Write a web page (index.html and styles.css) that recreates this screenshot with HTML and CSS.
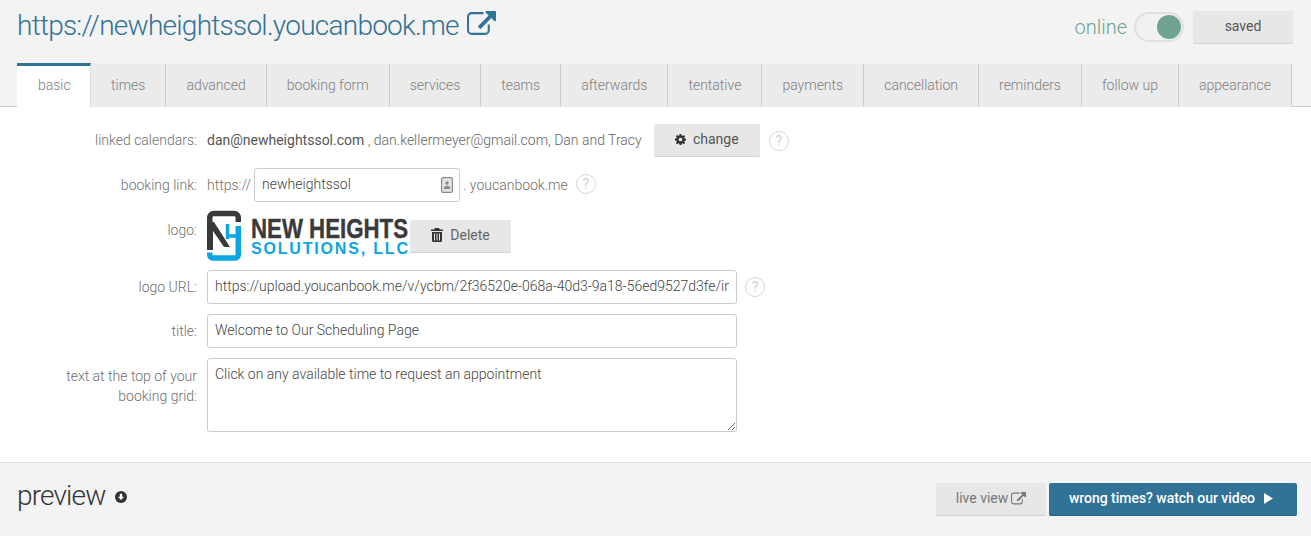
FILE: index.html
```html
<!DOCTYPE html>
<html lang="en">
<head>
<meta charset="utf-8">
<title>youcanbook.me settings</title>
<link rel="stylesheet" href="styles.css">
</head>
<body>
<svg class="defs" width="0" height="0" aria-hidden="true">
  <symbol id="ext" viewBox="0 0 28 24"><path fill="currentColor" d="M22 13.500v5A4.500 4.500 0 0 1 17.500 23h-13A4.500 4.500 0 0 1 0 18.500v-13A4.500 4.500 0 0 1 4.500 1H15.500a.5.500 0 0 1 .5.500v1a.5.500 0 0 1-.5.500H4.500A2.500 2.500 0 0 0 2 5.500v13A2.500 2.500 0 0 0 4.500 21h13a2.500 2.500 0 0 0 2.500-2.500v-5a.5.500 0 0 1 .5-.5h1a.5.500 0 0 1 .5.500zM28 .9v8a1 1 0 0 1-1.700.7l-2.800-2.800-10.200 10.200a.5.500 0 0 1-.7 0l-1.800-1.800a.5.500 0 0 1 0-.7L20.900 4.300 18.100 1.500A1 1 0 0 1 18.800-.1h8A1 1 0 0 1 28 .9z"/></symbol>
</svg>
<header class="top">
  <div class="title-row">
    <h1 class="site-url"><span class="url-text">https://newheightssol.youcanbook.me</span> <svg class="ext-big"><use href="#ext"/></svg></h1>
    <div class="status">
      <span class="online">online</span>
      <span class="toggle"><span class="knob"></span></span>
      <button class="btn saved">saved</button>
    </div>
  </div>
  <nav class="tabs">
    <a class="tab active">basic</a><a class="tab">times</a><a class="tab">advanced</a><a class="tab">booking form</a><a class="tab">services</a><a class="tab">teams</a><a class="tab">afterwards</a><a class="tab">tentative</a><a class="tab">payments</a><a class="tab">cancellation</a><a class="tab">reminders</a><a class="tab">follow up</a><a class="tab">appearance</a>
  </nav>
</header>
<main class="form">
  <div class="row row-cal">
    <label class="lbl">linked calendars:</label>
    <div class="ctl">
      <div class="cal-text"><span class="cal-main">dan@newheightssol.com</span><span class="cal-rest">&nbsp;, dan.kellermeyer@gmail.com, Dan and Tracy</span></div>
      <button class="btn change">
        <svg class="i-gear" viewBox="0 0 16 16"><path fill="#333" fill-rule="evenodd" d="M6.700 0h2.600l.4 2.200 1.300.6 1.900-1.300 1.800 1.800-1.300 1.900.6 1.300 2 .4v2.600l-2 .4-.6 1.300 1.300 1.900-1.800 1.800-1.900-1.300-1.300.6-.4 2H6.700l-.4-2-1.300-.6-1.900 1.300-1.800-1.800 1.300-1.900-.6-1.300-2-.4V6.700l2-.4.6-1.300L1.300 3.100l1.800-1.800L5 2.600l1.300-.6zM8 5.300a2.700 2.700 0 1 0 0 5.400 2.700 2.700 0 0 0 0-5.400z"/></svg>
        change
      </button>
      <span class="help help-cal">?</span>
    </div>
  </div>
  <div class="row row-link">
    <label class="lbl">booking link:</label>
    <div class="ctl">
      <span class="muted">https://</span>
      <span class="input-wrap">
        <input class="field short" value="newheightssol">
        <svg class="contact" viewBox="0 0 12 16"><rect x=".6" y=".6" width="10.800" height="14.800" rx="1.500" fill="#e4e4e4" stroke="#8a8a8a" stroke-width="1.200"/><circle cx="6" cy="6" r="1.700" fill="#8a8a8a"/><path d="M2.800 12c0-2.200 1.200-3.200 3.200-3.200s3.200 1 3.200 3.200z" fill="#8a8a8a"/></svg>
      </span>
      <span class="muted suffix">. youcanbook.me</span>
      <span class="help help-link">?</span>
    </div>
  </div>
  <div class="row row-logo">
    <label class="lbl">logo:</label>
    <div class="ctl">
      <svg class="logo" width="203" height="50" viewBox="0 0 203 50" role="img" aria-label="New Heights Solutions, LLC">
        <path fill="none" stroke="#3a3a3c" stroke-width="5.500" d="M2.750 39V6.500a4 4 0 0 1 4-4h20.500a4 4 0 0 1 4 4v4.500"/>
        <path fill="none" stroke="#0ea5e4" stroke-width="5.500" d="M31.250 15v29a3 3 0 0 1-3 3H5.750a3 3 0 0 1-3-3v-2.500"/>
        <path fill="#3a3a3c" d="M2 11h5l16 25h-6L6 20v19H2z"/>
        <path fill="none" stroke="#0ea5e4" stroke-width="3.500" d="M20.500 13v15M29 25H20.500"/>
        <text class="logo-a" x="44" y="26.500" textLength="157" lengthAdjust="spacingAndGlyphs">NEW HEIGHTS</text>
        <text class="logo-b" x="44" y="43" textLength="157" lengthAdjust="spacing">SOLUTIONS, LLC</text>
      </svg>
      <button class="btn delete">
        <svg class="i-trash" viewBox="0 0 12 14"><path fill="#333" d="M4 0h4l.8 1.500H12v1.500H0V1.500h3.200zM1 4h10v8.500A1.500 1.500 0 0 1 9.500 14h-7A1.500 1.500 0 0 1 1 12.500zm2 1.500v7h1v-7zm2.500 0v7h1v-7zm2.500 0v7h1v-7z"/></svg>
        Delete
      </button>
    </div>
  </div>
  <div class="row row-url">
    <label class="lbl">logo URL:</label>
    <div class="ctl">
      <input class="field wide" value="https://upload.youcanbook.me/v/ycbm/2f36520e-068a-40d3-9a18-56ed9527d3fe/image.png">
      <span class="help help-url">?</span>
    </div>
  </div>
  <div class="row row-title">
    <label class="lbl">title:</label>
    <div class="ctl"><input class="field wide" value="Welcome to Our Scheduling Page"></div>
  </div>
  <div class="row row-text">
    <label class="lbl">text at the top of your booking grid:</label>
    <div class="ctl"><textarea class="field wide area">Click on any available time to request an appointment</textarea></div>
  </div>
</main>
<footer class="foot">
  <div class="preview"><span class="preview-t">preview</span>
    <svg class="i-down" viewBox="0 0 12 12"><circle cx="6" cy="6" r="6" fill="#333"/><path fill="#fff" d="M4.800 2.800h2.400v3h1.800L6 9 3 5.800h1.800z"/></svg>
  </div>
  <div class="foot-btns">
    <button class="btn live">live view <svg class="ext-small"><use href="#ext"/></svg></button>
    <button class="btn video">wrong times? watch our video <svg class="i-play" viewBox="0 0 10 12"><path fill="#fff" d="M0 0l10 6-10 6z"/></svg></button>
  </div>
</footer>
</body>
</html>
```
FILE: styles.css
```css
* { box-sizing: border-box; }
html, body { margin: 0; padding: 0; }
body {
  background: #fff;
  color: #555;
  font-family: Roboto, "Liberation Sans", sans-serif;
  font-size: 14px;
  height: 536px;
  overflow: hidden;
}
.defs { display: block; height: 0; }

.top { background: #f3f3f3; height: 107px; padding-left: 17px; border-bottom: 1px solid #ccc; }
.title-row { display: flex; justify-content: space-between; height: 63px; padding-right: 18px; }
.site-url {
  margin: 0;
  padding-top: 9px;
  font-size: 28px;
  line-height: 34px;
  font-weight: 300;
  color: #317297;
  white-space: nowrap;
}
.url-text { letter-spacing: -0.75px; }
.ext-big { width: 29px; height: 25px; vertical-align: -1px; margin-left: 1px; }
.status { display: flex; align-items: flex-start; padding-top: 11px; }
.online { font-size: 20px; font-weight: 300; color: #6fa393; line-height: 32px; margin-right: 7px; }
.toggle {
  display: block;
  width: 50px; height: 30px;
  margin-top: 1px;
  border-radius: 15px;
  border: 2px solid #e0e0e0;
  background: #f1f1f1;
  position: relative;
}
.knob {
  position: absolute; right: 1px; top: 1px;
  width: 24px; height: 24px;
  border-radius: 50%;
  background: #6fa393;
}
.btn {
  border: 0;
  border-bottom: 1px solid #d2d2d2;
  border-radius: 2px;
  background: #e7e7e7;
  color: #555;
  font-family: inherit;
  font-size: 14px;
  padding: 0;
  display: inline-flex;
  align-items: center;
  justify-content: center;
}
.saved { width: 100px; height: 33px; margin-left: 9px; padding-bottom: 2px; }

.tabs { display: flex; height: 44px; }
.tab {
  display: block;
  padding: 13px 20px 0;
  height: 43px;
  margin-top: 1px;
  background: #ebebeb;
  border-right: 1px solid #ccc;
  color: #808080;
  font-size: 14px;
  font-weight: 300;
  line-height: 17px;
  white-space: nowrap;
}
.tab.active {
  background: #fff;
  height: 44px;
  margin-top: 0;
  border-top: 3px solid #317297;
  padding: 11px 0 0 21px;
  width: 74px;
  border-right: 1px solid #ddd;
}

.form { height: 356px; padding-top: 17px; border-bottom: 1px solid #ddd; }
.row { display: flex; }
.lbl {
  width: 197px;
  flex: none;
  text-align: right;
  color: #707070;
  font-weight: 300;
  padding-left: 50px;
  line-height: 20px;
}
.ctl { margin-left: 10px; display: flex; align-items: center; height: 100%; }
.row-cal { height: 33px; align-items: center; }
.row-cal .lbl { padding-bottom: 2px; }
.cal-text { padding-bottom: 2px; }
.row-link { height: 34px; margin-top: 11px; align-items: center; }
.row-logo { height: 50px; margin-top: 9px; }
.row-logo .lbl { padding-top: 9px; }
.row-url { height: 34px; margin-top: 9px; align-items: center; }
.row-title { height: 34px; margin-top: 10px; align-items: center; }
.row-text { height: 74px; margin-top: 10px; }
.row-text .lbl { padding-top: 8px; }
.row-text .ctl { align-items: flex-start; }

.cal-main { color: #555; }
.cal-rest { color: #666; font-weight: 300; }
.change { width: 106px; height: 33px; margin-left: 12px; color: #555; padding-bottom: 2px; }
.i-gear { width: 11px; height: 11px; margin-right: 7px; }
.help {
  display: block;
  width: 20px; height: 20px;
  border: 1px solid #d6d6d6;
  border-radius: 50%;
  color: #d0d0d0;
  text-align: center;
  line-height: 18px;
  font-size: 14px;
  background: #fff;
}
.help-cal { margin-left: 9px; }
.help-link { margin-left: 8px; margin-bottom: 2px; }
.help-url { margin-left: 8px; }

.muted { color: #707070; font-weight: 300; }
.suffix { margin-left: 3px; }
.input-wrap { position: relative; display: block; margin-left: 3px; height: 34px; }
.field {
  display: block;
  border: 1px solid #ccc;
  border-radius: 3px;
  background: #fff;
  color: #444;
  font-family: inherit;
  font-size: 14px;
  font-weight: 300;
  padding: 0 7px 2px;
  height: 34px;
  outline: 0;
}
.short { width: 206px; }
.wide { width: 530px; }
.area { height: 74px; padding-top: 5px; line-height: 20px; resize: vertical; }
.contact { position: absolute; right: 7px; top: 9px; width: 12px; height: 16px; }

.logo { display: block; flex: none; overflow: visible; }
.logo-a { font-family: "Liberation Sans Narrow", "Liberation Sans", sans-serif; font-weight: 700; font-size: 28px; fill: #3a3a3c; stroke: #3a3a3c; stroke-width: .4px; }
.logo-b { font-family: "Liberation Sans Narrow", "Liberation Sans", sans-serif; font-weight: 700; font-size: 16px; fill: #0ea5e4; }
.delete { width: 101px; height: 33px; margin-top: 1px; padding-bottom: 2px; color: #666; }
.i-trash { width: 12px; height: 14px; margin-right: 7px; }

.foot {
  background: #f3f3f3;
  height: 73px;
  display: flex;
  justify-content: space-between;
  padding: 0 14px 0 17px;
}
.preview { display: flex; align-items: flex-start; padding-top: 15px; }
.preview-t { font-size: 28px; font-weight: 300; line-height: 36px; color: #333; letter-spacing: -0.85px; }
.i-down { width: 12px; height: 12px; margin: 13px 0 0 10px; }
.foot-btns { display: flex; padding-top: 20px; gap: 3px; }
.live { width: 110px; height: 33px; color: #777; padding-bottom: 2px; }
.ext-small { width: 15px; height: 13px; margin-left: 3px; }
.video {
  width: 248px; height: 33px;
  background: #317297;
  border-bottom: 1px solid #2a5f7e;
  color: #fff;
  font-weight: 500;
  letter-spacing: -0.03px;
  padding: 0 4px 2px 0;
}
.i-play { width: 9px; height: 11px; margin-left: 9px; }
```
